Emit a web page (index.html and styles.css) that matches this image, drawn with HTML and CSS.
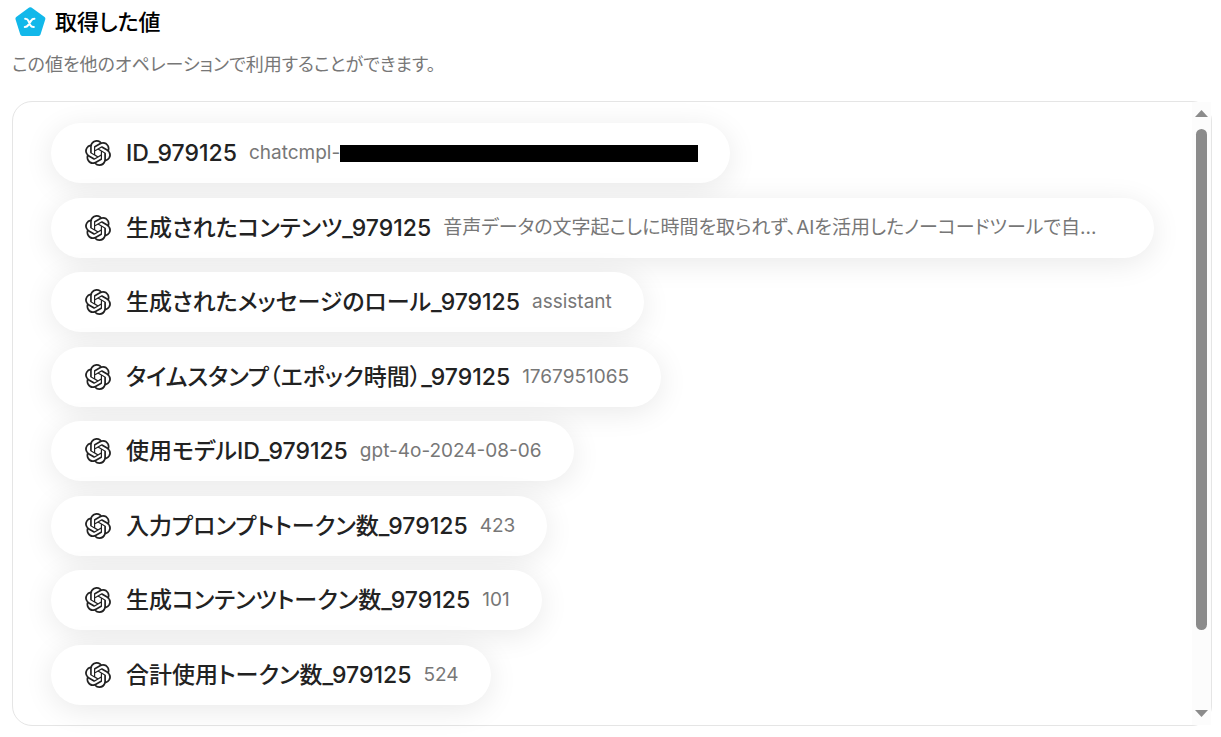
FILE: index.html
```
<!DOCTYPE html>
<html lang="ja">

<head>
    <meta charset="utf-8" />
    <meta name="viewport" content="width=device-width, initial-scale=1">
    <title>取得した値</title>
    <link rel="stylesheet" href="styles.css">
</head>

<body>
    <!-- アイコン定義 -->
    <svg class="defs" aria-hidden="true">
        <symbol id="openai" viewBox="0 0 24 24">
            <path d="M22.2819 9.8211a5.9847 5.9847 0 0 0-.5157-4.9108 6.0462 6.0462 0 0 0-6.5098-2.9A6.0651 6.0651 0 0 0 4.9807 4.1818a5.9847 5.9847 0 0 0-3.9977 2.9 6.0462 6.0462 0 0 0 .7427 7.0966 5.98 5.98 0 0 0 .511 4.9107 6.051 6.051 0 0 0 6.5146 2.9001A5.9847 5.9847 0 0 0 13.2599 24a6.0557 6.0557 0 0 0 5.7718-4.2058 5.9894 5.9894 0 0 0 3.9977-2.9001 6.0557 6.0557 0 0 0-.7475-7.0729zm-9.022 12.6081a4.4755 4.4755 0 0 1-2.8764-1.0408l.1419-.0804 4.7783-2.7582a.7948.7948 0 0 0 .3927-.6813v-6.7369l2.02 1.1686a.071.071 0 0 1 .038.052v5.5826a4.504 4.504 0 0 1-4.4945 4.4944zm-9.6607-4.1254a4.4708 4.4708 0 0 1-.5346-3.0137l.142.0852 4.783 2.7582a.7712.7712 0 0 0 .7806 0l5.8428-3.3685v2.3324a.0804.0804 0 0 1-.0332.0615L9.74 19.9502a4.4992 4.4992 0 0 1-6.1408-1.6464zM2.3408 7.8956a4.485 4.485 0 0 1 2.3655-1.9728V11.6a.7664.7664 0 0 0 .3879.6765l5.8144 3.3543-2.0201 1.1685a.0757.0757 0 0 1-.071 0l-4.8303-2.7865A4.504 4.504 0 0 1 2.3408 7.872zm16.5963 3.8558L13.1038 8.364 15.1192 7.2a.0757.0757 0 0 1 .071 0l4.8303 2.7913a4.4944 4.4944 0 0 1-.6765 8.1042v-5.6772a.79.79 0 0 0-.407-.667zm2.0107-3.0231l-.142-.0852-4.7735-2.7818a.7759.7759 0 0 0-.7854 0L9.409 9.2297V6.8974a.0662.0662 0 0 1 .0284-.0615l4.8303-2.7866a4.4992 4.4992 0 0 1 6.6802 4.66zM8.3065 12.863l-2.02-1.1638a.0804.0804 0 0 1-.038-.0567V6.0742a4.4992 4.4992 0 0 1 7.3757-3.4537l-.142.0805L8.704 5.459a.7948.7948 0 0 0-.3927.6813zm1.0976-2.3654l2.602-1.4998 2.6069 1.4998v2.9994l-2.5974 1.4997-2.6067-1.4997Z" />
        </symbol>
    </svg>

    <header class="header">
        <svg class="badge" viewBox="0 0 32 32" aria-hidden="true">
            <path d="M16.3 3.2 29.4 12.6 24.6 28H8.2L3.4 12.6Z" fill="#12b8ea" stroke="#12b8ea" stroke-width="4" stroke-linejoin="round" />
            <path d="M11.2 12.8c1.800 0 2.500.5 3.100 1.900l2 4.400c.6 1.300 1.300 1.900 3.500 1.900M20.400 12.800c-1.700 0-2.500.6-3.300 1.900l-2.900 4.400c-.8 1.300-1.600 1.900-3.400 1.900" fill="none" stroke="#fff" stroke-width="2.1" stroke-linecap="round" />
        </svg>
        <h1 class="title">取得した値</h1>
    </header>
    <p class="note">この値を他のオペレーションで利用することができます。</p>

    <!-- 値の一覧 -->
    <main class="panel">
        <ul class="list">
            <li class="item">
                <svg class="icon"><use href="#openai" /></svg>
                <span class="name">ID_979125</span>
                <span class="value">chatcmpl-<span class="mask"></span></span>
            </li>
            <li class="item wide">
                <svg class="icon"><use href="#openai" /></svg>
                <span class="name">生成されたコンテンツ_979125</span>
                <span class="value">音声データの文字起こしに時間を取られず、AIを活用したノーコードツールで自...</span>
            </li>
            <li class="item">
                <svg class="icon"><use href="#openai" /></svg>
                <span class="name">生成されたメッセージのロール_979125</span>
                <span class="value">assistant</span>
            </li>
            <li class="item">
                <svg class="icon"><use href="#openai" /></svg>
                <span class="name">タイムスタンプ（エポック時間）_979125</span>
                <span class="value">1767951065</span>
            </li>
            <li class="item">
                <svg class="icon"><use href="#openai" /></svg>
                <span class="name">使用モデルID_979125</span>
                <span class="value">gpt-4o-2024-08-06</span>
            </li>
            <li class="item">
                <svg class="icon"><use href="#openai" /></svg>
                <span class="name">入力プロンプトトークン数_979125</span>
                <span class="value">423</span>
            </li>
            <li class="item">
                <svg class="icon"><use href="#openai" /></svg>
                <span class="name">生成コンテンツトークン数_979125</span>
                <span class="value">101</span>
            </li>
            <li class="item">
                <svg class="icon"><use href="#openai" /></svg>
                <span class="name">合計使用トークン数_979125</span>
                <span class="value">524</span>
            </li>
        </ul>
        <!-- スクロールバー -->
        <div class="scroll">
            <button class="arrow" type="button" aria-label="上へ"><svg viewBox="0 0 13 7"><path d="M6.5 0 13 7H0Z" /></svg></button>
            <div class="track">
                <div class="thumb"></div>
            </div>
            <button class="arrow" type="button" aria-label="下へ"><svg viewBox="0 0 13 7"><path d="M0 0h13L6.5 7Z" /></svg></button>
        </div>
    </main>
</body>

</html>
```
FILE: styles.css
```
* {
    margin: 0;
    padding: 0;
    box-sizing: border-box;
}

body {
    display: flex;
    flex-direction: column;
    min-height: 100vh;
    padding: 4px 9px 11px 12px;
    background-color: #fff;
    color: #222;
    font-family: Inter, "Noto Sans CJK JP", sans-serif;
    font-feature-settings: "palt";
}

.defs {
    display: none;
}

/* 見出し */
.header {
    display: flex;
    align-items: center;
    gap: 9px;
    height: 36px;
    padding-left: 2px;
}

.badge {
    width: 32px;
    height: 32px;
}

.title {
    color: #000;
    font-size: 22px;
    font-weight: 500;
    line-height: 36px;
}

.note {
    margin: 12px 0 24px;
    color: #777;
    font-size: 18px;
    line-height: 25px;
}

/* 一覧の枠 */
.panel {
    flex: 1;
    display: flex;
    border: 1px solid #e5e5e5;
    border-radius: 20px;
}

.list {
    flex: 1;
    min-width: 0;
    display: flex;
    flex-direction: column;
    align-items: flex-start;
    justify-content: space-between;
    padding: 21px 38px 20px;
    list-style: none;
}

.item {
    display: flex;
    align-items: center;
    max-width: 100%;
    height: 60px;
    padding: 0 32px 0 34px;
    border-radius: 30px;
    background-color: #fff;
    box-shadow: 0 5px 30px rgba(0, 0, 0, 0.09);
    line-height: 26px;
    white-space: nowrap;
}

/* 長い値は横幅いっぱい */
.item.wide {
    width: 100%;
}

.icon {
    flex: none;
    width: 26px;
    height: 26px;
    margin-right: 15px;
    fill: #222;
}

.name {
    margin-right: 12px;
    font-size: 23px;
    font-weight: 500;
}

.value {
    color: #777;
    font-size: 19px;
}

.mask {
    display: inline-block;
    width: 358px;
    height: 17px;
    background-color: #000;
    vertical-align: middle;
}

/* スクロールバー */
.scroll {
    display: flex;
    flex-direction: column;
    align-items: center;
    width: 19px;
    padding: 8px 0;
    background-color: #fcfcfc;
}

.arrow {
    display: flex;
    border: 0;
    background: none;
}

.arrow svg {
    width: 13px;
    height: 7px;
    fill: #8b8b8b;
}

.track {
    flex: 1;
    width: 11px;
    margin: 12px 0;
}

.thumb {
    height: 88%;
    border-radius: 6px;
    background-color: #8b8b8b;
}
```
